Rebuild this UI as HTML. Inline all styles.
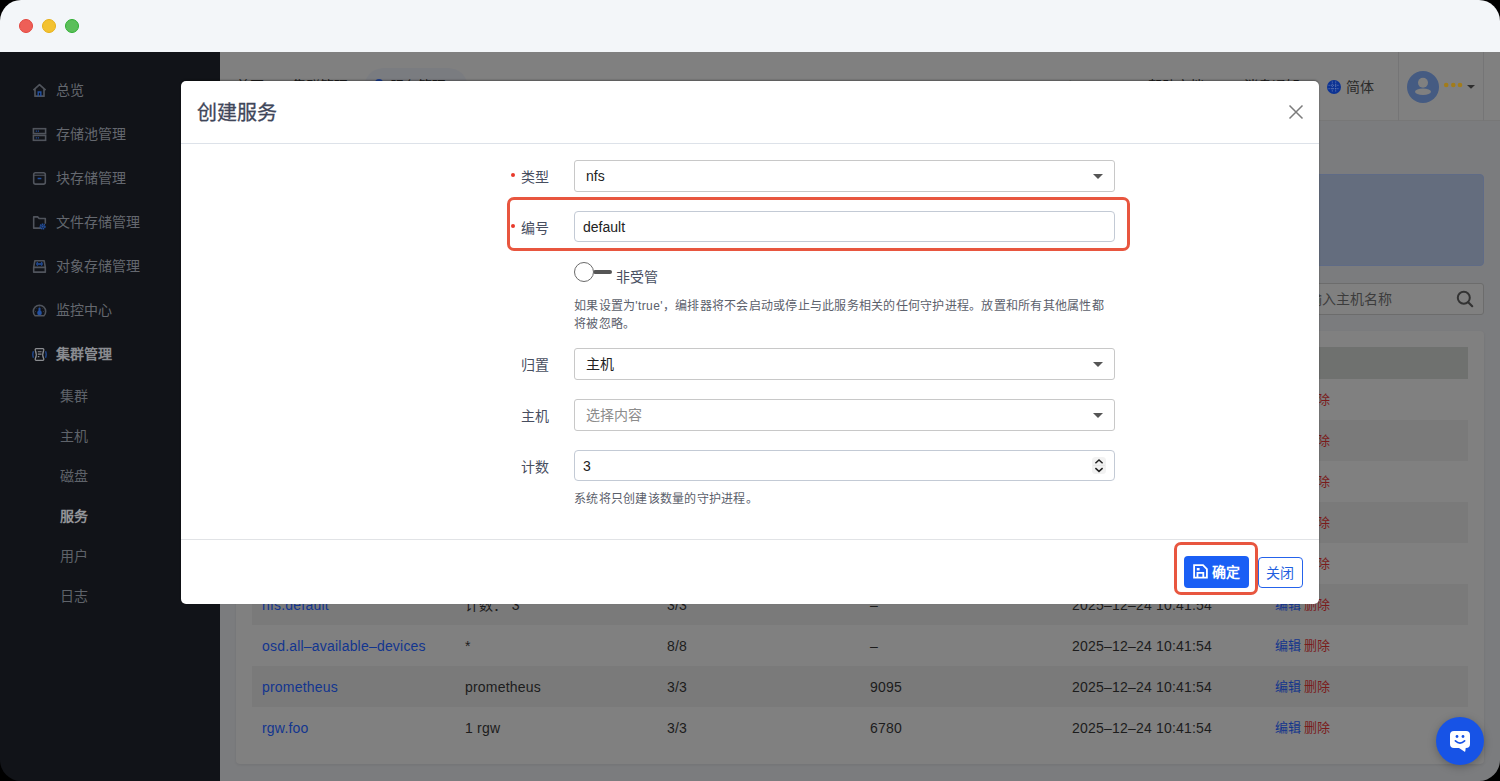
<!DOCTYPE html>
<html lang="zh-CN">
<head>
<meta charset="utf-8">
<style>
*{box-sizing:border-box;margin:0;padding:0}
html,body{width:1500px;height:781px;overflow:hidden;background:#000;font-family:"Liberation Sans",sans-serif}
.win{position:absolute;left:0;top:0;width:1500px;height:781px;border-radius:21px;overflow:hidden}
.abs{position:absolute}
.hb{font-size:14px;line-height:20px;color:#1e1e1e;white-space:nowrap}
.titlebar{left:0;top:0;width:1500px;height:52px;background:#f3f6f9}
.tl{position:absolute;top:19px;width:14px;height:14px;border-radius:50%}
.sidebar{left:0;top:52px;width:220px;height:729px;background:#111318}
.nav{position:absolute;left:0;width:220px;height:20px;font-size:14px;color:#64686f;line-height:20px}
.nav .ic{position:absolute;left:32px;top:3px;width:15px;height:15px}
.nav .tx{position:absolute;left:56px;top:0}
.sub{position:absolute;left:60px;font-size:14px;color:#5f636a;line-height:20px}
.header{left:220px;top:52px;width:1280px;height:69px;background:#808080;border-bottom:1px solid #777}
.modal{left:181px;top:81px;width:1138px;height:523px;background:#fff;border-radius:5px;box-shadow:0 -1px 2px rgba(0,0,0,.35)}
.tbl .row{position:relative;height:41px;font-size:14px;line-height:20px;color:#1c1c1c}
.tbl .row.st{background:#7a7a7a}
.tbl .row span{position:absolute;top:11px;white-space:nowrap;letter-spacing:.2px}
.c1{left:10px;color:#12358f}.c2{left:213px}.c3{left:415px}.c4{left:618px}.c5{left:820px}.c6{left:1023px}
.c6{font-size:13px;letter-spacing:0!important;word-spacing:-1px}.c6 b{font-weight:normal;color:#13358c}.c6 i{font-style:normal;color:#7a1b1b}
.card{box-shadow:0 1px 3px rgba(0,0,0,.08)}
.chat{left:1436px;top:717px;width:48px;height:48px;border-radius:50%;background:#1753e6;box-shadow:0 2px 8px rgba(0,0,0,.25)}
.mt{font-size:20px;line-height:24px;color:#404659;white-space:nowrap;-webkit-text-stroke:.3px #404659}
.req{width:4px;height:4px;border-radius:50%;background:#e8392b}
.lbl{font-size:14px;line-height:20px;color:#474e5f;white-space:nowrap}
.sel,.inp{position:absolute;width:541px;border:1px solid #c8c8c8;border-radius:3px;background:#fff;font-size:14px;color:#222}
.inp{border-color:#c3cad5;border-radius:4px}
.sel .v,.inp .v{position:absolute;top:5px;line-height:20px;white-space:nowrap}
.car{position:absolute;left:518px;top:13px;width:0;height:0;border-left:5px solid transparent;border-right:5px solid transparent;border-top:5px solid #555}
.help{font-size:12px;line-height:18px;color:#5b606b;letter-spacing:.25px;white-space:nowrap}
.btn1{background:#1a5ff5;border-radius:4px;color:#fff;font-size:14px;line-height:20px;font-weight:bold}
.btn2{background:#fff;border:1px solid #2563eb;border-radius:4px;color:#1f5fe0;font-size:14px;line-height:20px;text-align:center;padding-top:5px;padding-right:2px}
.nav.act .tx{color:#8a8c91;font-weight:bold}
.sub.act{color:#939599;font-weight:bold}
.modal>*{margin-top:-1px}
</style>
</head>
<body>
<div class="win">
  <div class="abs titlebar">
    <div class="tl" style="left:19px;background:#ee5f57;border:1px solid #e2463f"></div>
    <div class="tl" style="left:42px;background:#f3c230;border:1px solid #e6b019"></div>
    <div class="tl" style="left:65px;background:#5bbf5a;border:1px solid #2fae33"></div>
  </div>
  <div class="abs" style="left:220px;top:52px;width:1280px;height:729px;background:#7b7c7e"></div>
  <div class="abs sidebar">
    <div class="nav" style="top:28px"><svg class="ic" width="16" height="16" viewBox="0 0 16 16"><path d="M1.5 7.5L8 1.8l6.5 5.7M3.2 6.3v7.7h9.6V6.3" fill="none" stroke="#50545c" stroke-width="1.8" stroke-linejoin="round"/><path d="M6.6 14V9.6h2.8V14" fill="none" stroke="#2350a0" stroke-width="1.5"/></svg><span class="tx">总览</span></div>
    <div class="nav" style="top:72px"><svg class="ic" width="16" height="16" viewBox="0 0 16 16"><rect x="1.5" y="1.8" width="13" height="5.2" fill="none" stroke="#50545c" stroke-width="1.7"/><rect x="1.5" y="9" width="13" height="5.2" fill="none" stroke="#50545c" stroke-width="1.7"/><path d="M4 4.4h1.2M6.2 4.4h1.2M4 11.6h1.2M6.2 11.6h1.2" stroke="#2350a0" stroke-width="1.2"/></svg><span class="tx">存储池管理</span></div>
    <div class="nav" style="top:116px"><svg class="ic" width="16" height="16" viewBox="0 0 16 16"><rect x="1.8" y="1.8" width="12.4" height="12.2" rx="2" fill="none" stroke="#50545c" stroke-width="1.7"/><path d="M1.8 4.5h12.4" stroke="#50545c" stroke-width="1.2"/><path d="M6 8h4" stroke="#2350a0" stroke-width="1.4"/></svg><span class="tx">块存储管理</span></div>
    <div class="nav" style="top:160px"><svg class="ic" width="16" height="16" viewBox="0 0 16 16"><path d="M9.5 14H1.8V2h4.2l1.6 1.8h6.6v5.5" fill="none" stroke="#50545c" stroke-width="1.7" stroke-linejoin="round"/><circle cx="11.3" cy="12.3" r="2.3" fill="none" stroke="#2350a0" stroke-width="2" stroke-dasharray="1.3 .5"/><circle cx="11.3" cy="12.3" r="1.2" fill="#2350a0"/></svg><span class="tx">文件存储管理</span></div>
    <div class="nav" style="top:204px"><svg class="ic" width="16" height="16" viewBox="0 0 16 16"><path d="M3 1.9h10l1.2 7V14H1.8V8.9z M1.8 8.9h12.4" fill="none" stroke="#50545c" stroke-width="1.7" stroke-linejoin="round"/><path d="M6.2 3.6Q4.2 5.3 6.2 7M9.8 3.6Q11.8 5.3 9.8 7M6.4 5.3h3.2" fill="none" stroke="#2350a0" stroke-width="1.5"/></svg><span class="tx">对象存储管理</span></div>
    <div class="nav" style="top:248px"><svg class="ic" width="16" height="16" viewBox="0 0 16 16"><path d="M3.3 13.6A6.6 6.6 0 1 1 12.7 13.6z" fill="none" stroke="#50545c" stroke-width="1.7" stroke-linejoin="round"/><circle cx="8" cy="10.6" r="2.5" fill="#2350a0"/><path d="M8 8.6V5.8" stroke="#2350a0" stroke-width="2.2" stroke-linecap="round"/><path d="M8 3.8v.6M4.5 5.8l.4.4M11.5 5.8l-.4.4M3.3 9.1h.6M12.1 9.1h.6" stroke="#50545c" stroke-width="1"/></svg><span class="tx">监控中心</span></div>
    <div class="nav act" style="top:292px"><svg class="ic" width="16" height="16" viewBox="0 0 16 16"><path d="M4.5 1.8h7a1.2 1.2 0 0 1 1 1.6 11 11 0 0 0 0 9.2 1.2 1.2 0 0 1-1 1.6h-7a1.2 1.2 0 0 1-1-1.6 11 11 0 0 0 0-9.2 1.2 1.2 0 0 1 1-1.6z" fill="none" stroke="#8a8c90" stroke-width="1.4"/><path d="M6.2 5h4M6.2 7.6h4M6.2 10.3h1.6" stroke="#8a8c90" stroke-width="1.2"/><path d="M1.5 4.6q-1.2 3.4 0 6.8M14.5 4.6q1.2 3.4 0 6.8" fill="none" stroke="#2350a0" stroke-width="1.3"/></svg><span class="tx">集群管理</span></div>
    <div class="sub" style="top:334px">集群</div>
    <div class="sub" style="top:374px">主机</div>
    <div class="sub" style="top:414px">磁盘</div>
    <div class="sub act" style="top:454px">服务</div>
    <div class="sub" style="top:494px">用户</div>
    <div class="sub" style="top:534px">日志</div>
  </div>
  <div class="abs header"></div>

  <!-- header contents -->
  <div class="abs" style="left:364px;top:68px;width:104px;height:40px;border-radius:20px;background:#7a7c80"></div>
  <div class="abs hb" style="left:236px;top:76px">首页</div>
  <div class="abs hb" style="left:292px;top:76px">集群管理</div>
  <div class="abs" style="left:375px;top:79px;width:8px;height:8px;border-radius:50%;background:#1d3f94"></div>
  <div class="abs hb" style="left:390px;top:76px">服务管理</div>
  <div class="abs hb" style="left:1064px;top:76px">⚙</div>
  <div class="abs hb" style="left:1148px;top:76px">帮助文档</div>
  <div class="abs hb" style="left:1244px;top:76px">消息通知</div>

  <div class="abs" style="left:1398px;top:52px;width:1px;height:69px;background:#757576"></div>
  <div class="abs" style="left:1483px;top:52px;width:1px;height:69px;background:#757576"></div>
  <svg class="abs" style="left:1327px;top:80px" width="14" height="14" viewBox="0 0 14 14">
    <circle cx="7" cy="7" r="7" fill="#0c3394"/>
    <g stroke="#6f83b8" stroke-width="0.8" fill="none" stroke-dasharray="1.2 1">
      <line x1="5.3" y1="1.5" x2="5.3" y2="12.5"/><line x1="8.7" y1="1.5" x2="8.7" y2="12.5"/>
      <line x1="1.5" y1="5.3" x2="12.5" y2="5.3"/><line x1="1.5" y1="8.7" x2="12.5" y2="8.7"/>
    </g>
  </svg>
  <div class="abs" style="left:1346px;top:77px;font-size:14px;line-height:20px;color:#2b2b2b">简体</div>
  <svg class="abs" style="left:1407px;top:71px" width="32" height="32" viewBox="0 0 32 32">
    <circle cx="16" cy="16" r="16" fill="#455b82"/>
    <circle cx="16" cy="11.7" r="5" fill="#808080"/>
    <ellipse cx="16" cy="20.7" rx="8" ry="3.2" fill="#808080"/>
  </svg>
  <svg class="abs" style="left:1443px;top:82px" width="34" height="8" viewBox="0 0 34 8">
    <circle cx="3.2" cy="3" r="2.3" fill="#a27c1a"/><circle cx="10.3" cy="3" r="2.3" fill="#a27c1a"/><circle cx="17" cy="3" r="2.3" fill="#a27c1a"/>
    <path d="M24 3h8l-4 3.8z" fill="#2e2e2e"/>
  </svg>
  <!-- content -->
  <div class="abs" style="left:236px;top:174px;width:1248px;height:92px;border-radius:4px;background:#646d7e;border:1px solid #5f6b86"></div>
  <div class="abs" style="left:1180px;top:283px;width:304px;height:32px;border-radius:3px;background:#808080;border:1px solid #6c6c6c"></div>
  <div class="abs" style="left:1294px;top:289px;font-size:14px;line-height:20px;color:#3c3c3c">请输入主机名称</div>
  <svg class="abs" style="left:1456px;top:290px" width="18" height="18" viewBox="0 0 18 18">
    <circle cx="7.8" cy="7.8" r="6" fill="none" stroke="#333" stroke-width="2"/>
    <path d="M12.2 12.2l4 4" stroke="#333" stroke-width="2.2" stroke-linecap="round"/>
  </svg>
  <div class="abs card" style="left:236px;top:331px;width:1248px;height:433px;border-radius:4px;background:#808080"></div>
  <div class="abs" style="left:252px;top:347px;width:1216px;height:32px;background:#6f716f"></div>
  <div class="abs tbl" style="left:252px;top:379px;width:1216px">
    <div class="row"><span class="c1">alertmanager</span><span class="c2">alertmanager</span><span class="c3">3/3</span><span class="c4">9093 9094</span><span class="c5">2025-12-24 10:41:54</span><span class="c6"><b>编辑</b> <i>删除</i></span></div>
    <div class="row st"><span class="c1">ceph-exporter</span><span class="c2">*</span><span class="c3">8/8</span><span class="c4">-</span><span class="c5">2025-12-24 10:41:54</span><span class="c6"><b>编辑</b> <i>删除</i></span></div>
    <div class="row"><span class="c1">crash</span><span class="c2">*</span><span class="c3">8/8</span><span class="c4">-</span><span class="c5">2025-12-24 10:41:54</span><span class="c6"><b>编辑</b> <i>删除</i></span></div>
    <div class="row st"><span class="c1">grafana</span><span class="c2">grafana</span><span class="c3">3/3</span><span class="c4">3000</span><span class="c5">2025-12-24 10:41:54</span><span class="c6"><b>编辑</b> <i>删除</i></span></div>
    <div class="row"><span class="c1">mgr</span><span class="c2">计数： 3</span><span class="c3">3/3</span><span class="c4">-</span><span class="c5">2025-12-24 10:41:54</span><span class="c6"><b>编辑</b> <i>删除</i></span></div>
    <div class="row st"><span class="c1">nfs.default</span><span class="c2">计数： 3</span><span class="c3">3/3</span><span class="c4">–</span><span class="c5">2025–12–24 10:41:54</span><span class="c6"><b>编辑</b> <i>删除</i></span></div>
    <div class="row"><span class="c1">osd.all–available–devices</span><span class="c2">*</span><span class="c3">8/8</span><span class="c4">–</span><span class="c5">2025–12–24 10:41:54</span><span class="c6"><b>编辑</b> <i>删除</i></span></div>
    <div class="row st"><span class="c1">prometheus</span><span class="c2">prometheus</span><span class="c3">3/3</span><span class="c4">9095</span><span class="c5">2025–12–24 10:41:54</span><span class="c6"><b>编辑</b> <i>删除</i></span></div>
    <div class="row"><span class="c1">rgw.foo</span><span class="c2">1 rgw</span><span class="c3">3/3</span><span class="c4">6780</span><span class="c5">2025–12–24 10:41:54</span><span class="c6"><b>编辑</b> <i>删除</i></span></div>
  </div>
  <div class="abs modal">
    <div class="abs mt" style="left:16px;top:21px">创建服务</div>
    <svg class="abs" style="left:1107px;top:24px" width="16" height="16" viewBox="0 0 16 16"><path d="M1.5 1.5l13 13M14.5 1.5l-13 13" stroke="#7c7c7c" stroke-width="1.5"/></svg>
    <div class="abs" style="left:0;top:63px;width:1138px;height:1px;background:#dde2e9"></div>
    <!-- type -->
    <div class="abs req" style="left:330px;top:93px"></div>
    <div class="abs lbl" style="left:340px;top:87px">类型</div>
    <div class="abs sel" style="left:393px;top:80px;height:32px"><span class="v" style="left:11px">nfs</span><i class="car"></i></div>
    <!-- id -->
    <div class="abs" style="left:326px;top:117px;width:623px;height:54px;border:3px solid #e8563f;border-radius:7px"></div>
    <div class="abs req" style="left:330px;top:144px"></div>
    <div class="abs lbl" style="left:340px;top:138px">编号</div>
    <div class="abs inp" style="left:393px;top:131px;height:31px"><span class="v" style="left:8px">default</span></div>
    <!-- toggle -->
    <div class="abs" style="left:412px;top:190px;width:19px;height:4px;border-radius:2px;background:#555"></div>
    <div class="abs" style="left:393px;top:182px;width:20px;height:20px;border-radius:50%;border:1px solid #6a6a6a;background:#fff"></div>
    <div class="abs lbl" style="left:435px;top:187px">非受管</div>
    <div class="abs help" style="left:393px;top:217px;width:545px">如果设置为<span style="letter-spacing:.4px">'true'</span>，编排器将不会启动或停止与此服务相关的任何守护进程。放置和所有其他属性都<br>将被忽略。</div>
    <!-- placement -->
    <div class="abs lbl" style="left:340px;top:275px">归置</div>
    <div class="abs sel" style="left:393px;top:268px;height:32px"><span class="v" style="left:11px">主机</span><i class="car"></i></div>
    <div class="abs lbl" style="left:340px;top:326px">主机</div>
    <div class="abs sel" style="left:393px;top:319px;height:32px"><span class="v" style="left:11px;color:#8c8c8c">选择内容</span><i class="car"></i></div>
    <div class="abs lbl" style="left:340px;top:377px">计数</div>
    <div class="abs inp" style="left:393px;top:370px;height:31px"><span class="v" style="left:8px">3</span>
      <svg class="abs" style="left:517px;top:6px" width="14" height="17" viewBox="0 0 14 17"><rect x="0" y="0" width="14" height="17" rx="3.5" fill="#f2f2f2"/><path d="M1 8.4h12" stroke="#dedede" stroke-width=".6"/><path d="M3.4 6.2L7 2.9l3.6 3.3M3.4 11.1L7 14.4l3.6-3.3" stroke="#222" stroke-width="1.5" fill="none"/></svg>
    </div>
    <div class="abs help" style="left:393px;top:410px">系统将只创建该数量的守护进程。</div>
    <!-- footer -->
    <div class="abs" style="left:0;top:459px;width:1138px;height:1px;background:#e1e3e6"></div>
    <div class="abs btn2" style="left:1077px;top:477px;width:45px;height:31px">关闭</div>
    <div class="abs" style="left:993px;top:462px;width:84px;height:53px;border:3px solid #e8563f;border-radius:7px;background:#fff"></div>
    <div class="abs btn1" style="left:1003px;top:476px;width:65px;height:32px">
      <svg class="abs" style="left:9px;top:8px" width="15" height="15" viewBox="0 0 15 15"><path d="M1.1 1.1H10l3.9 3.9v8.7H1.1z" fill="none" stroke="#fff" stroke-width="1.8" stroke-linejoin="miter"/><rect x="3.8" y="4" width="2.8" height="2.4" fill="#fff"/><path d="M4.5 13.7V8.9h5.8v4.8" fill="none" stroke="#fff" stroke-width="1.8"/></svg>
      <span class="abs" style="left:28px;top:6px">确定</span>
    </div>
  </div>
  <div class="abs chat"><svg style="position:absolute;left:13px;top:13px" width="22" height="22" viewBox="0 0 22 22"><path d="M5 1h12a4 4 0 0 1 4 4v9a4 4 0 0 1-4 4h-.3l-.4 3.2a.6.6 0 0 1-1 .3L10 18H5a4 4 0 0 1-4-4V5a4 4 0 0 1 4-4z" fill="#fff"/><circle cx="8" cy="6.5" r="1.4" fill="#1753e6"/><circle cx="14" cy="6.5" r="1.4" fill="#1753e6"/><path d="M6.4 10.9q4.6 4.4 9.2 0" stroke="#1753e6" stroke-width="1.7" fill="none" stroke-linecap="round"/></svg></div>
</div>
</body>
</html>
